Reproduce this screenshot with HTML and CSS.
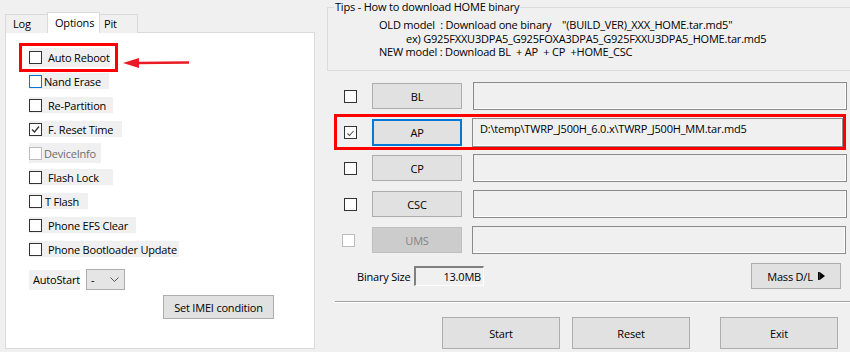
FILE: index.html
```html
<!DOCTYPE html>
<html>
<head>
<meta charset="utf-8">
<link rel="stylesheet" href="styles.css">
</head>
<body>
<div class="app">
  <div class="left">
    <div class="tabs">
      <div class="tab tab-log">Log</div>
      <div class="tab tab-options">Options</div>
      <div class="tab tab-pit">Pit</div>
    </div>
    <div class="panel">
      <div class="opts">
        <div class="slot"><div class="opt w-auto"><span class="cb"></span><span class="lbl">Auto Reboot</span></div></div>
        <div class="slot"><div class="opt w-nand"><span class="cb cb-focus"></span><span class="lbl tight">Nand Erase</span></div></div>
        <div class="slot"><div class="opt w-repart"><span class="cb"></span><span class="lbl">Re-Partition</span></div></div>
        <div class="slot"><div class="opt w-freset"><span class="cb"><svg viewBox="0 0 11 11" class="chk"><polyline points="2,5.5 4.5,8 9,2.5"/></svg></span><span class="lbl">F. Reset Time</span></div></div>
        <div class="slot"><div class="opt w-dev tall"><span class="cb cb-dis"></span><span class="lbl tight dis">DeviceInfo</span></div></div>
        <div class="slot"><div class="opt w-flash"><span class="cb"></span><span class="lbl">Flash Lock</span></div></div>
        <div class="slot"><div class="opt w-tflash"><span class="cb"></span><span class="lbl tight1">T Flash</span></div></div>
        <div class="slot"><div class="opt w-efs"><span class="cb"></span><span class="lbl">Phone EFS Clear</span></div></div>
        <div class="slot"><div class="opt w-boot"><span class="cb"></span><span class="lbl">Phone Bootloader Update</span></div></div>
      </div>
      <div class="autostart">
        <span class="as-label">AutoStart</span>
        <div class="combo"><span class="combo-val">-</span><svg class="chev" viewBox="0 0 9 5"><polyline points="0.5,0.5 4.5,4.5 8.5,0.5"/></svg></div>
      </div>
      <div class="imei-row"><div class="btn btn-imei">Set IMEI condition</div></div>
    </div>
  </div>

  <div class="right">
    <div class="tips">
      <div class="tips-title">Tips - How to download HOME binary</div>
      <div class="tip-line tip-first">OLD model  : Download one binary    "(BUILD_VER)_XXX_HOME.tar.md5"</div>
      <div class="tip-line tip-ex">ex) G925FXXU3DPA5_G925FOXA3DPA5_G925FXXU3DPA5_HOME.tar.md5</div>
      <div class="tip-line">NEW model : Download BL  + AP  + CP  +HOME_CSC</div>
    </div>

    <div class="files">
      <div class="frow">
        <span class="cb rcb"></span>
        <div class="btn fbtn">BL</div>
        <div class="field"></div>
      </div>
      <div class="frow">
        <span class="cb rcb"><svg viewBox="0 0 11 11" class="chk chk-ap"><polyline points="2.5,6.5 4.5,8.5 8.5,4"/></svg></span>
        <div class="btn fbtn fbtn-focus">AP</div>
        <div class="field field-ap">D:\temp\TWRP_J500H_6.0.x\TWRP_J500H_MM.tar.md5</div>
      </div>
      <div class="frow">
        <span class="cb rcb"></span>
        <div class="btn fbtn">CP</div>
        <div class="field"></div>
      </div>
      <div class="frow">
        <span class="cb rcb"></span>
        <div class="btn fbtn">CSC</div>
        <div class="field"></div>
      </div>
      <div class="frow">
        <span class="cb rcb cb-dis rcb-dis"></span>
        <div class="btn fbtn btn-dis">UMS</div>
        <div class="field field-ums"></div>
      </div>
    </div>

    <div class="size-row">
      <span class="size-label">Binary Size</span>
      <div class="size-box">13.0MB</div>
      <div class="btn btn-mass">Mass D/L <svg class="play" viewBox="0 0 8 9"><rect x="0" y="0" width="2" height="9"/><polygon points="2,0 8,4.5 2,9"/></svg></div>
    </div>
    <div class="sep"></div>
    <div class="actions">
      <div class="btn act">Start</div>
      <div class="btn act">Reset</div>
      <div class="btn act act-exit">Exit</div>
    </div>
  </div>
</div>

<div class="mark mark-auto"></div>
<div class="mark mark-ap"></div>
<svg class="arrow" viewBox="0 0 72 14"><polygon points="3,7 19,2 19,12"/><line x1="17" y1="7" x2="69" y2="6.5"/></svg>
</body>
</html>
```

FILE: styles.css
```css
* { box-sizing: border-box; }
html, body {
  margin: 0;
  padding: 0;
}
body {
  width: 850px;
  height: 352px;
  overflow: hidden;
  background: #f0f0f0;
  font-family: "Open Sans", "Noto Sans", sans-serif;
  font-size: 11px;
  letter-spacing: -0.2px;
  color: #000;
  position: relative;
}
.app {
  display: flex;
  height: 352px;
}

/* ---------- left ---------- */
.left {
  width: 315px;
  padding-left: 5px;
  padding-top: 13px;
  flex: none;
}
.tabs {
  display: flex;
  align-items: flex-end;
  height: 20px;
  position: relative;
  z-index: 1;
  margin-bottom: -1px;
}
.tab {
  border: 1px solid #d9d9d9;
  border-bottom: none;
  background: #f0f0f0;
  height: 19px;
  line-height: 17px;
  padding-left: 7px;
}
.tab-log { width: 43px; }
.tab-options {
  width: 53px;
  height: 21px;
  background: #fff;
  margin-left: -1px;
  padding-left: 7px;
  line-height: 19px;
}
.tab-pit {
  width: 39px;
  margin-left: -1px;
  padding-left: 4px;
}
.panel {
  width: 310px;
  height: 317px;
  border: 1px solid #d9d9d9;
  background: #fff;
  padding-left: 23px;
}
.opts {
  padding-top: 12px;
  display: flex;
  flex-direction: column;
}
.slot {
  height: 24px;
  display: flex;
  align-items: center;
}
.opt {
  display: flex;
  align-items: center;
  height: 16px;
  background: #f0f0f0;
}
.opt.tall { height: 20px; }
.w-auto { width: 81px; height: 19px; }
.w-nand { width: 80px; }
.w-repart { width: 84px; }
.w-freset { width: 93px; }
.w-dev { width: 72px; }
.w-flash { width: 84px; }
.w-tflash { width: 59px; }
.w-efs { width: 107px; }
.w-boot { width: 150px; }

.cb {
  width: 13px;
  height: 13px;
  border: 1px solid #333;
  background: #fff;
  flex: none;
  display: flex;
  align-items: center;
  justify-content: center;
}
.cb-focus { border-color: #0078d7; }
.cb-dis { border-color: #bcbcbc; }
.chk {
  width: 11px;
  height: 11px;
  fill: none;
  stroke: #333;
  stroke-width: 1.3;
}
.chk-ap { stroke: #555; stroke-width: 1.1; }
.lbl {
  margin-left: 6px;
  white-space: nowrap;
}
.lbl.tight { margin-left: 2px; }
.lbl.tight1 { margin-left: 3px; }
.lbl.dis { color: #6d6d6d; }

.autostart {
  display: flex;
  align-items: center;
  margin-top: 8px;
  height: 21px;
}
.as-label {
  background: #f0f0f0;
  height: 20px;
  line-height: 20px;
  width: 51px;
  padding-left: 4px;
}
.combo {
  margin-left: 6px;
  width: 39px;
  height: 21px;
  border: 1px solid #adadad;
  background: #e5e5e5;
  display: flex;
  align-items: center;
  justify-content: space-between;
  padding: 0 5px 0 4px;
}
.chev {
  width: 9px;
  height: 5px;
  fill: none;
  stroke: #555;
  stroke-width: 1;
}
.imei-row {
  display: flex;
  padding-left: 134px;
  margin-top: 5px;
}
.btn {
  background: #e1e1e1;
  border: 1px solid #adadad;
  display: flex;
  align-items: center;
  justify-content: center;
  white-space: nowrap;
}
.btn-imei {
  width: 111px;
  height: 24px;
}

/* ---------- right ---------- */
.right {
  margin-left: 12px;
  flex: 1;
  min-width: 0;
}
.tips {
  margin: 7px -30px 0 0;
  height: 64px;
  border: 1px solid #dcdcdc;
}
.tips-title {
  width: fit-content;
  margin: -7px 0 0 6px;
  padding: 0 1px;
  line-height: 12px;
  height: 12px;
  background: #f0f0f0;
  white-space: nowrap;
}
.tip-line {
  white-space: pre;
  line-height: 13.5px;
  padding-left: 51px;
}
.tip-first { margin-top: 5px; }
.tip-ex { padding-left: 78px; }

.files {
  margin-top: 7px;
  display: flex;
  flex-direction: column;
}
.frow {
  height: 36px;
  display: flex;
  align-items: center;
}
.rcb { margin-left: 17px; }
.rcb-dis { margin-left: 15px; margin-right: 2px; }
.fbtn {
  margin-left: 15px;
  width: 90px;
  height: 26px;
}
.fbtn-focus {
  border: 2px solid #0078d7;
  height: 27px;
}
.btn-dis {
  background: #cccccc;
  border-color: #bfbfbf;
  color: #838383;
}
.field {
  margin-left: 11px;
  width: 374px;
  height: 28px;
  border: 1px solid #8a8a8a;
  box-shadow: inset -1px -1px 0 #fff;
  background: #f0f0f0;
  padding: 2px 0 0 7px;
  white-space: nowrap;
}
.field-ap {
  margin-left: 10px;
  width: 371px;
  height: 29px;
}
.field-ums { margin-left: 10px; }

.size-row {
  display: flex;
  align-items: center;
  height: 36px;
  padding-left: 30px;
}
.size-label { width: 57px; }
.size-box {
  width: 70px;
  height: 20px;
  border-top: 2px solid #808080;
  border-left: 2px solid #808080;
  border-right: 1px solid #fff;
  border-bottom: 1px solid #fff;
  background: #f0f0f0;
  text-align: right;
  padding-right: 2px;
  line-height: 17px;
}
.btn-mass {
  margin-left: auto;
  margin-right: 9px;
  width: 90px;
  height: 26px;
  gap: 5px;
}
.play {
  width: 7px;
  height: 8px;
  fill: #000;
}
.sep {
  margin-left: 8px;
  margin-top: 7px;
  height: 2px;
  border-top: 1px solid #a0a0a0;
  border-bottom: 1px solid #fff;
}
.actions {
  display: flex;
  margin-top: 14px;
  padding-left: 115px;
}
.act {
  width: 119px;
  height: 32px;
  margin-right: 12px;
}
.act-exit { margin-left: 18px; }

/* ---------- annotations ---------- */
.mark {
  position: absolute;
  border: 3px solid #f00;
}
.mark-auto {
  left: 19px;
  top: 43px;
  width: 99px;
  height: 29px;
}
.mark-ap {
  left: 334px;
  top: 114px;
  width: 512px;
  height: 36px;
}
.arrow {
  position: absolute;
  left: 120px;
  top: 56px;
  width: 72px;
  height: 14px;
}
.arrow polygon { fill: #ea1b24; }
.arrow line { stroke: #ea1b24; stroke-width: 2.5; }
```
